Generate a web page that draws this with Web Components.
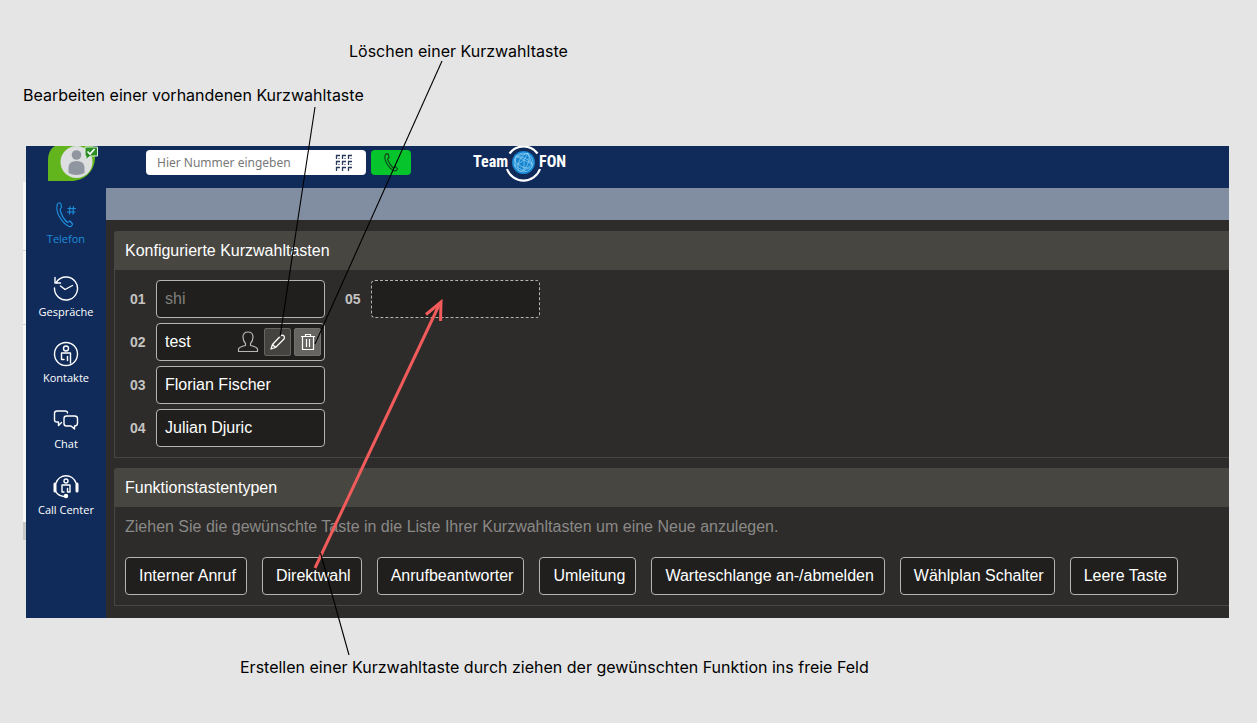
<!DOCTYPE html>
<html lang="de">
<head>
<meta charset="utf-8">
<meta name="viewport" content="width=device-width, initial-scale=1">
<title>Kurzwahltasten</title>
<style>
  body { margin: 0; background: #e5e5e5; font-family: "Liberation Sans", Arial, sans-serif; }
</style>
</head>
<body>
<help-page>
  <help-note slot="top" style="--indent: 349px">Löschen einer Kurzwahltaste</help-note>
  <help-note slot="top" style="--indent: 23px">Bearbeiten einer vorhandenen Kurzwahltaste</help-note>
  <phone-app>
    <app-header slot="header"></app-header>
    <nav-item slot="nav" icon="phone" active>Telefon</nav-item>
    <nav-item slot="nav" icon="history">Gespräche</nav-item>
    <nav-item slot="nav" icon="contact">Kontakte</nav-item>
    <nav-item slot="nav" icon="chat">Chat</nav-item>
    <nav-item slot="nav" icon="center">Call Center</nav-item>
    <key-panel>
      <span slot="title">Konfigurierte Kurzwahltasten</span>
      <key-grid>
        <speed-key number="01" dim>shi</speed-key>
        <speed-key number="02" tools>test</speed-key>
        <speed-key number="03">Florian Fischer</speed-key>
        <speed-key number="04">Julian Djuric</speed-key>
        <speed-key number="05" empty></speed-key>
      </key-grid>
    </key-panel>
    <key-panel>
      <span slot="title">Funktionstastentypen</span>
      <function-list>
        <span slot="hint">Ziehen Sie die gewünschte Taste in die Liste Ihrer Kurzwahltasten um eine Neue anzulegen.</span>
        <function-key>Interner Anruf</function-key>
        <function-key>Direktwahl</function-key>
        <function-key>Anrufbeantworter</function-key>
        <function-key>Umleitung</function-key>
        <function-key>Warteschlange an-/abmelden</function-key>
        <function-key>Wählplan Schalter</function-key>
        <function-key>Leere Taste</function-key>
      </function-list>
    </key-panel>
  </phone-app>
  <help-note slot="bottom" style="--indent: 240px">Erstellen einer Kurzwahltaste durch ziehen der gewünschten Funktion ins freie Feld</help-note>
  <pointer-lines slot="overlay"></pointer-lines>
</help-page>

<script>
const define = (name, html, setup) => {
  const template = document.createElement('template');
  template.innerHTML = html;
  customElements.define(name, class extends HTMLElement {
    constructor() {
      super();
      this.attachShadow({ mode: 'open' }).append(template.content.cloneNode(true));
    }
    connectedCallback() { if (setup) setup(this, this.shadowRoot); }
  });
};

define('help-page', `
  <style>
    :host { display: block; position: relative; min-height: 100vh; }
    .top { display: flex; flex-direction: column; gap: 20px; padding: 39px 0; }
    main { padding: 0 28px 0 26px; }
    .bottom { padding: 37px 0; }
  </style>
  <div class="top"><slot name="top"></slot></div>
  <main><slot></slot></main>
  <div class="bottom"><slot name="bottom"></slot></div>
  <slot name="overlay"></slot>`);

define('help-note', `
  <style>
    :host { display: block; padding-left: var(--indent); font: 400 16px/24px Inter, sans-serif; color: #000; }
  </style>
  <slot></slot>`);

define('pointer-lines', `
  <style>
    :host { position: absolute; inset: 0; overflow: hidden; pointer-events: none; }
    svg { display: block; overflow: visible; }
  </style>
  <svg width="600" height="700" fill="none" aria-hidden="true">
    <g stroke="#f15b5b" stroke-width="3">
      <path d="M315 568L440 303"/><path d="M426 314.500L441 302L440.500 321"/>
    </g>
    <g stroke="#000" stroke-width="1.100">
      <path d="M315 107L280 337"/><path d="M442 61L315 344"/><path d="M320.500 553L349 655"/>
    </g>
  </svg>`);

define('phone-app', `
  <style>
    :host { display: block; position: relative; background: #2d2c2a; }
    :host::before { content: ""; position: absolute; left: -3px; top: 36px; width: 3px; height: 358px;
      background: linear-gradient(#d0d0d0, #d0d0d0) 0 68px / 3px 1px no-repeat,
                  linear-gradient(#d0d0d0, #d0d0d0) 0 142px / 3px 1px no-repeat,
                  linear-gradient(#f7f7f7 340px, #c8c8c8 340px); }
    .columns { display: flex; }
    nav { flex: 0 0 80px; box-sizing: border-box; background: #102b5a; padding: 13px 0;
      display: flex; flex-direction: column; gap: 20px; }
    .work { flex: 1; min-width: 0; }
    .band { height: 32px; background: #818da0; }
    .panels { display: flex; flex-direction: column; gap: 10px; padding: 11px 0 12px 8px; }
  </style>
  <slot name="header"></slot>
  <div class="columns">
    <nav><slot name="nav"></slot></nav>
    <div class="work">
      <div class="band"></div>
      <div class="panels"><slot></slot></div>
    </div>
  </div>`);

define('app-header', `
  <style>
    :host { display: flex; align-items: flex-start; height: 42px; overflow: hidden; background: #102b5a; padding-left: 22px; }
    svg { display: block; }
    .avatar { flex: none; margin-right: 48px; }
    .dial { display: flex; align-items: center; box-sizing: border-box; width: 220px; height: 25px; margin: 4px 5px 0 0;
      padding: 0 13px 0 11px; background: #fff; border-radius: 4px; }
    input { flex: 1; min-width: 0; padding: 0; border: 0; outline: 0; background: none; color: #333;
      font: 12px/20px "Noto Sans", "Open Sans", sans-serif; }
    input::placeholder { color: #777; opacity: 1; }
    button { padding: 0; border: 0; background: none; }
    .call { display: grid; place-items: center; width: 40px; height: 25px; margin: 4px 62px 0 0; background: #06c52c; border-radius: 4px; }
    .logo { display: flex; align-items: flex-start; color: #fff; text-decoration: none;
      font: 700 16px/32px "Liberation Sans Narrow", "Roboto Condensed", Roboto, sans-serif; }
    .logo svg { overflow: visible; }
  </style>
  <svg class="avatar" width="50" height="36" viewBox="0 0 50 36" role="img" aria-label="Profil: verfügbar">
    <path d="M0 35V14C0 7 3 2 7 0H45C47 4 47 9 47 13C46 26 36 35 23 35Z" fill="#62b51d"/>
    <circle cx="28.500" cy="16" r="16" fill="#dcdee0"/>
    <circle cx="28.500" cy="9" r="4.800" fill="#8f969f"/>
    <path d="M20.500 27V22Q20.500 15 28.500 15T36.500 22V27Q28.500 31 20.500 27Z" fill="#8f969f"/>
    <path d="M37 1H49.500V10H42.500L38 13.500V10H37Z" fill="#2c8e24" stroke="#dff0da"/>
    <path d="M39.500 5.500L42 8L46.500 3" fill="none" stroke="#fff" stroke-width="1.600"/>
  </svg>
  <div class="dial">
    <input type="tel" placeholder="Hier Nummer eingeben" aria-label="Hier Nummer eingeben">
    <button type="button" aria-label="Wähltastatur">
      <svg width="18" height="18" fill="none">
        <path d="M1.500 5V1.500H5M7.500 5V1.500H11M13.500 5V1.500H17M1.500 11V7.500H5M7.500 11V7.500H11M13.500 11V7.500H17M1.500 17V13.500H5M7.500 17V13.500H11M13.500 17V13.500H17" stroke="#27385a" stroke-width="1.300"/>
        <path d="M3 4.500H5M9 4.500H11M15 4.500H17M3 10.500H5M9 10.500H11M15 10.500H17" stroke="#8790a3"/>
      </svg>
    </button>
  </div>
  <button class="call" type="button" aria-label="Anrufen">
    <svg width="16" height="19" viewBox="0 0 16 19" fill="none" stroke="#12481c" stroke-width="1.200" stroke-linejoin="round">
      <path d="M4.500 6L6 4.500L5.500 1.500Q4 0 2.500 1.500Q.5 5 4 11Q7.500 16.500 11.500 18Q13.500 18 14.500 16L12.500 13.500L10.500 15Q7 12.500 4.500 6"/>
    </svg>
  </button>
  <a class="logo" href="#" aria-label="TeamFON">
    <span>Team</span>
    <svg width="31" height="36" viewBox="0 0 31 36" fill="none">
      <path d="M1.500 7.500A17.500 17.500 0 0 1 29.500 7.500M-1 23A17.500 17.500 0 0 0 32 23" stroke="#fff" stroke-width="2.200"/>
      <circle cx="15.500" cy="16.500" r="11.500" fill="#1685d0"/>
      <g stroke="#8dd0f3" stroke-width=".7">
        <circle cx="15.500" cy="16.500" r="9.500"/>
        <ellipse cx="15.500" cy="16.500" rx="4.500" ry="9.500" transform="rotate(25 15.500 16.500)"/>
        <ellipse cx="15.500" cy="16.500" rx="9.500" ry="4.500" transform="rotate(25 15.500 16.500)"/>
        <path d="M8 10L20 7L24 18L16 25L7 20ZM8 10L16 14L24 18M20 7L16 14L7 20M16 14L16 25"/>
      </g>
    </svg>
    <span>FON</span>
  </a>`);

const navIcons = {
  phone: '<path stroke-width="1.200" d="M8 8.500L9.500 6.500L9 3Q7 .5 5.500 3Q3.500 8 7 15Q11.500 23 17 25.500Q20 26 20.500 23L18 20L15.500 21.500Q10 17 8 8.500"/><path stroke-width="1.200" d="M18 5.500L17.500 13M21.500 5.500L21 13M16 7.500H23.500M15.500 11H23"/>',
  history: '<path d="M4.500 8A11.500 11.500 0 1 1 2.500 14M3 3.500V9H8.500M8.500 12L13 15.500L20.500 11.500"/>',
  contact: '<circle cx="14" cy="14" r="11.500"/><circle cx="14" cy="8.500" r="2.500"/><path d="M12 19.500H9.500V13H18.500V23M15.500 16.500V20.500"/>',
  chat: '<path d="M9.500 16.500L6.500 19.500V16H5Q2.500 16 2.500 13.500V7.500Q2.500 5 5 5H13Q15.500 5 15.500 7"/><path d="M14.500 10H22.500Q25.500 10 25.500 12.500V17Q25.500 20 22.500 20V23L19 20H14.500Q12 20 12 17.500V12.500Q12 10 14.500 10Z"/>',
  center: '<path d="M4 11A10.500 10.500 0 0 1 24 11M3.500 19Q6 24 12 24.500"/><path d="M3 12V19M25 12V19" stroke-width="3"/><circle cx="14" cy="9" r="2"/><path d="M12 20H10V13H18V20H15.500V16.500"/><circle cx="14" cy="24" r="1.500" fill="currentColor"/>'
};
define('nav-item', `
  <style>
    :host { display: block; color: #fff; }
    :host([active]) { color: #1e8ddb; margin-bottom: 7px; }
    a { display: flex; flex-direction: column; align-items: center; gap: 2px; color: inherit; text-decoration: none;
      font: 11px/16px "Open Sans", "Noto Sans", sans-serif; white-space: nowrap; }
    svg { display: block; width: 28px; height: 28px; }
  </style>
  <a href="#"><svg viewBox="0 0 28 28" fill="none" stroke="currentColor" stroke-width="1.400" stroke-linejoin="round" stroke-linecap="round" aria-hidden="true"></svg><slot></slot></a>`,
  (host, root) => { root.querySelector('svg').innerHTML = navIcons[host.getAttribute('icon')]; });

define('key-panel', `
  <style>
    :host { display: block; border: 1px solid #474643; border-right: 0; border-radius: 3px 0 0 0; }
    h2 { margin: 0; padding: 0 10px; background: #474641; color: #fff; font-size: 16px; line-height: 38px; font-weight: 400; }
  </style>
  <h2><slot name="title"></slot></h2>
  <slot></slot>`);

define('key-grid', `
  <style>
    :host { display: grid; grid-template-rows: repeat(4, 38px); grid-auto-flow: column; grid-auto-columns: max-content;
      gap: 5px 20px; padding: 10px 15px; }
  </style>
  <slot></slot>`);

define('speed-key', `
  <style>
    :host { display: flex; align-items: center; font-size: 16px; color: #fff; }
    b { width: 26px; font-size: 14px; color: #c4c3c1; }
    .field { display: flex; align-items: center; gap: 3px; box-sizing: border-box; width: 169px; height: 38px; padding: 0 3px 0 8px;
      border: 1px solid #b5b4b2; border-radius: 4px; background: #201f1d; }
    .name { flex: 1; }
    :host([dim]) .name { color: #80807e; }
    :host([empty]) .field { border-style: dashed; }
    :host(:not([tools])) .tool { display: none; }
    svg { display: block; }
    .user { margin-right: 2px; }
    button { display: grid; place-items: center; width: 27px; height: 28px; padding: 0; border: 1px solid #666562; border-radius: 2px; background: #444340; }
    .delete { background: #666562; border-color: #72716e; }
  </style>
  <b></b>
  <div class="field">
    <span class="name"><slot></slot></span>
    <svg class="tool user" width="22" height="22" fill="none" stroke="#b7b6b4" stroke-width="1.200" stroke-linejoin="round" aria-hidden="true"><path d="M1.500 20.500V18Q2 16 8.500 14.500V12.500Q6 10 6 6Q6 1 11 1T16 6Q16 10 13.500 12.500V14.500Q20 16 20.500 18V20.500Z"/></svg>
    <button class="tool edit" type="button" aria-label="Bearbeiten"><svg width="18" height="18" fill="none" stroke="#fff" stroke-width="1.300" stroke-linejoin="round"><path d="M2 16L3.500 11.500L12 2.500Q13.500 1.500 15 3Q16 4.500 15 6L6.500 14.500ZM3.500 11.500L6.500 14.500"/></svg></button>
    <button class="tool delete" type="button" aria-label="Löschen"><svg width="18" height="18" fill="none" stroke="#fff" stroke-width="1.200"><path d="M2 3.500H16M6.500 3.500V1.500H11.500V3.500M3.500 3.500V16.500H14.500V3.500M7.500 6V14M10.500 6V14"/></svg></button>
  </div>`,
  (host, root) => { root.querySelector('b').textContent = host.getAttribute('number'); });

define('function-list', `
  <style>
    :host { display: block; padding: 11px 10px 10px; }
    p { margin: 0 0 21px; font-size: 16px; line-height: 18px; color: #8a8987; }
    .keys { display: flex; flex-wrap: wrap; gap: 15px; }
  </style>
  <p><slot name="hint"></slot></p>
  <div class="keys"><slot></slot></div>`);

define('function-key', `
  <style>
    :host { display: block; }
    button { display: block; height: 38px; padding: 0 10px 0 13px; border: 1px solid #b5b4b2; border-radius: 4px;
      background: #201f1d; color: #fff; font: 16px/36px "Liberation Sans", Arial, sans-serif; white-space: nowrap; }
  </style>
  <button type="button"><slot></slot></button>`);
</script>
</body>
</html>
